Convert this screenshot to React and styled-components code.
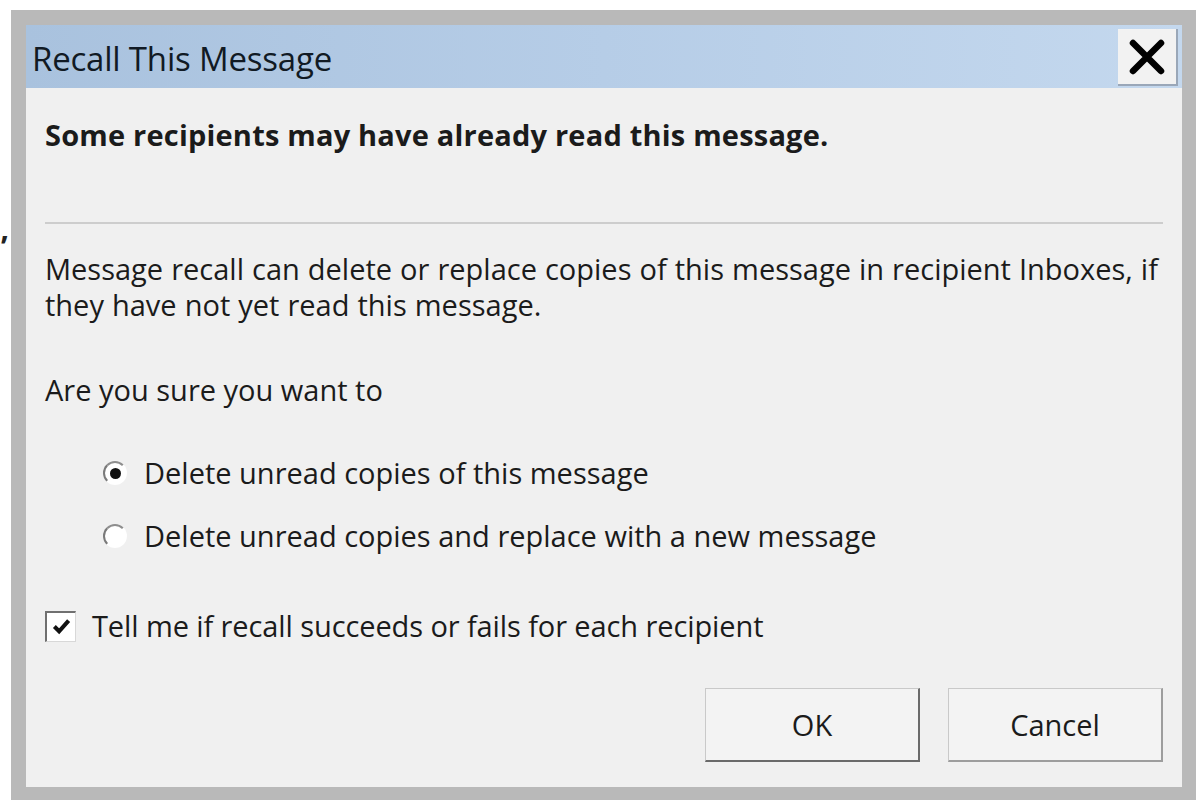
import React from 'react';
import styled, { createGlobalStyle } from 'styled-components';

const GlobalStyle = createGlobalStyle`
  html, body {
    margin: 0;
    padding: 0;
    background: #ffffff;
  }
  body {
    font-family: "Open Sans", "Noto Sans", "Liberation Sans", sans-serif;
    color: #1b1b1b;
  }
`;

function App() {
  return (
    <Page>
      <GlobalStyle />
      <StrayMark>’</StrayMark>
      <Frame>
        <Dialog>
          <TitleBar>
            <Title>Recall This Message</Title>
            <CloseButton aria-label="Close">
              <svg width="38" height="38" viewBox="0 0 38 38">
                <path d="M5 5 L33 33 M33 5 L5 33" stroke="#000" strokeWidth="6.5" strokeLinecap="round" />
              </svg>
            </CloseButton>
          </TitleBar>
          <Body>
            <Warning>Some recipients may have already read this message.</Warning>
            <Separator />
            <Paragraph>
              Message recall can delete or replace copies of this message in recipient Inboxes, if
              <br />
              they have not yet read this message.
            </Paragraph>
            <Question>Are you sure you want to</Question>
            <Options>
              <Option>
                <Radio checked />
                Delete unread copies of this message
              </Option>
              <Option>
                <Radio />
                Delete unread copies and replace with a new message
              </Option>
            </Options>
            <CheckRow>
              <CheckBox>
                <svg width="19" height="17" viewBox="0 0 16 14">
                  <path d="M2 7 L6 11 L14 2" fill="none" stroke="#111" strokeWidth="3.4" />
                </svg>
              </CheckBox>
              Tell me if recall succeeds or fails for each recipient
            </CheckRow>
            <Buttons>
              <Button focused>OK</Button>
              <Button>Cancel</Button>
            </Buttons>
          </Body>
        </Dialog>
      </Frame>
    </Page>
  );
}

const Page = styled.div`
  position: relative;
  width: 1202px;
  height: 802px;
  box-sizing: border-box;
  padding: 10px 6px 2px 11px;
  display: flex;
`;

const StrayMark = styled.span`
  position: absolute;
  left: 1px;
  top: 226px;
  font-size: 30px;
  font-weight: 700;
  color: #222;
`;

const Frame = styled.div`
  flex: 1;
  background: #b9b9b9;
  padding: 15px 14px 13px 15px;
  display: flex;
`;

const Dialog = styled.div`
  flex: 1;
  background: #f0f0f0;
  display: flex;
  flex-direction: column;
`;

const TitleBar = styled.div`
  height: 63px;
  background: linear-gradient(90deg, #a9c2de 0%, #b6cde7 50%, #c4d8ee 100%);
  display: flex;
  align-items: center;
  justify-content: space-between;
  padding: 0 4px 0 6px;
`;

const Title = styled.div`
  font-size: 33px;
  color: #111a24;
  letter-spacing: -0.2px;
  margin-top: 4px;
`;

const CloseButton = styled.div`
  width: 60px;
  height: 57px;
  margin-top: 2px;
  background: #f2f2f2;
  border-right: 2px solid #9aa7b8;
  border-bottom: 2px solid #9aa7b8;
  box-sizing: border-box;
  display: flex;
  align-items: center;
  justify-content: center;
`;

const Body = styled.div`
  flex: 1;
  padding: 0 19px 0 19px;
  display: flex;
  flex-direction: column;
`;

const Warning = styled.div`
  font-size: 29px;
  font-weight: 700;
  margin-top: 29px;
  line-height: 36px;
  letter-spacing: 0.2px;
`;

const Separator = styled.div`
  height: 2px;
  background: #cdcdcd;
  margin-top: 69px;
`;

const Paragraph = styled.div`
  font-size: 29px;
  line-height: 36px;
  margin-top: 27px;
  white-space: nowrap;
  word-spacing: 0.5px;
`;

const Question = styled.div`
  font-size: 29px;
  line-height: 36px;
  margin-top: 49px;
`;

const Options = styled.div`
  display: flex;
  flex-direction: column;
  gap: 27px;
  margin-top: 47px;
  padding-left: 58px;
`;

const Option = styled.div`
  display: flex;
  align-items: center;
  gap: 17px;
  font-size: 29px;
  line-height: 36px;
`;

const Radio = styled.span`
  width: 24px;
  height: 24px;
  border-radius: 50%;
  background: #fff;
  border: 2px solid transparent;
  border-left-color: #7a7a7a;
  border-top-color: #8e8e8e;
  box-sizing: border-box;
  display: flex;
  align-items: center;
  justify-content: center;
  &::after {
    content: "";
    width: 11px;
    height: 11px;
    border-radius: 50%;
    background: ${p => (p.checked ? '#111' : 'transparent')};
  }
`;

const CheckRow = styled.div`
  display: flex;
  align-items: center;
  gap: 16px;
  font-size: 29px;
  line-height: 36px;
  margin-top: 54px;
  letter-spacing: -0.1px;
`;

const CheckBox = styled.span`
  width: 31px;
  height: 31px;
  background: #fff;
  border-top: 2px solid #707070;
  border-left: 2px solid #707070;
  border-right: 1px solid #d8d8d8;
  border-bottom: 1px solid #d8d8d8;
  box-sizing: border-box;
  display: flex;
  align-items: center;
  justify-content: center;
`;

const Buttons = styled.div`
  display: flex;
  justify-content: flex-end;
  gap: 28px;
  margin-top: 44px;
`;

const Button = styled.div`
  width: 215px;
  height: 74px;
  box-sizing: border-box;
  background: #f3f3f3;
  border: 1px solid #c9c9c9;
  border-right: 2px solid ${p => (p.focused ? '#6a6a6a' : '#9d9d9d')};
  border-bottom: 2px solid ${p => (p.focused ? '#6a6a6a' : '#9d9d9d')};
  display: flex;
  align-items: center;
  justify-content: center;
  font-size: 29px;
  color: #1b1b1b;
`;

export default App;
